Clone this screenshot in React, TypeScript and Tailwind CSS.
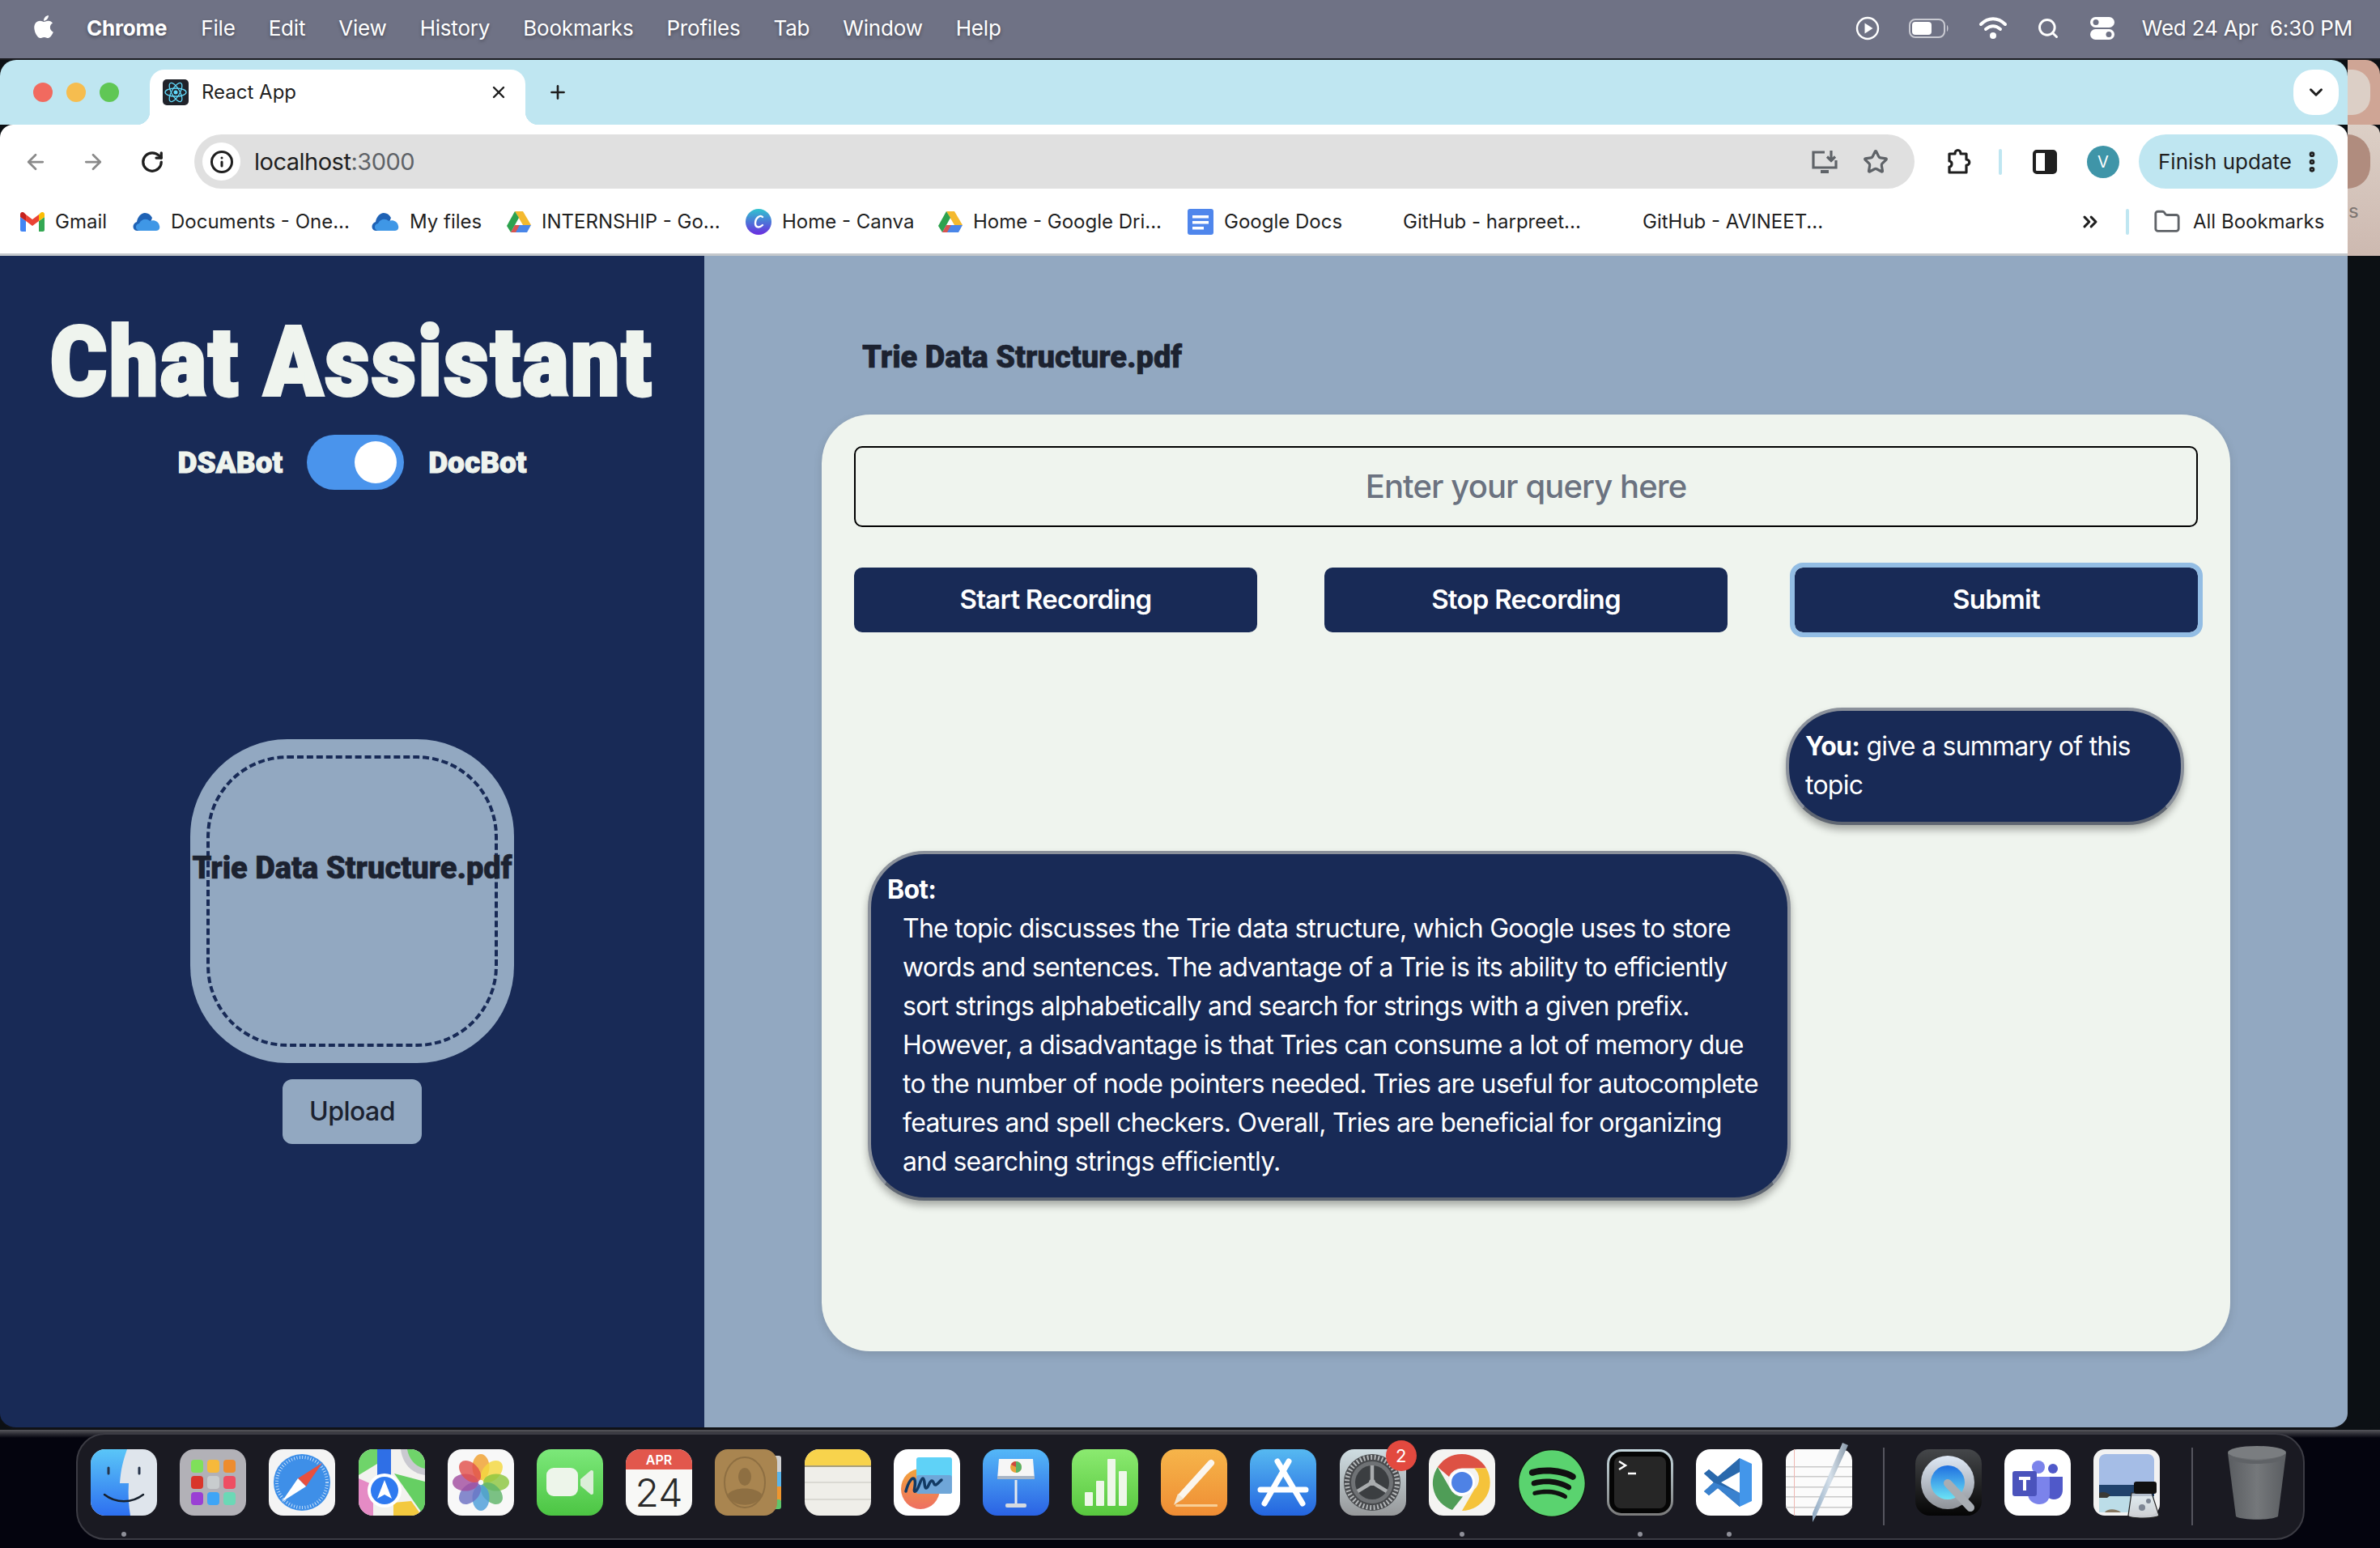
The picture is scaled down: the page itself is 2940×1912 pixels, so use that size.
import { FaApple, FaSpotify } from "react-icons/fa";
import {
  ArrowLeft,
  ArrowRight,
  RotateCw,
  Info,
  Star,
  X,
  Plus,
  ChevronDown,
  ChevronsRight,
  Folder,
  EllipsisVertical,
  Search,
} from "lucide-react";

const DISPLAY_FONT = "[font-family:Roboto,sans-serif]";

// --- menu bar ---
const MENU_ITEMS = ["File", "Edit", "View", "History", "Bookmarks", "Profiles", "Tab", "Window", "Help"];

function MenuBar() {
  return (
    <div className="h-[72px] shrink-0 bg-[#6f7285] flex items-center pb-[3px] text-white text-[26px] tracking-[-0.2px] [text-shadow:0_2px_4px_rgba(0,0,0,0.35)]">
      <FaApple className="ml-[38px] text-[32px] -mt-[4px]" />
      <span className="ml-[37px] font-bold">Chrome</span>
      <div className="ml-[42px] flex gap-[41px]">
        {MENU_ITEMS.map((m) => (
          <span key={m}>{m}</span>
        ))}
      </div>
      <div className="ml-auto mr-[34px] flex items-center">
        <svg width="32" height="32" viewBox="0 0 32 32" fill="none" stroke="white" strokeWidth="2.4">
          <circle cx="16" cy="16" r="13" />
          <path d="M12.5 9.5l10 6.5-10 6.5z" fill="white" stroke="none" />
        </svg>
        <svg className="ml-[35px]" width="50" height="26" viewBox="0 0 50 26" fill="none">
          <rect x="1" y="2" width="43" height="22" rx="7" stroke="#c9cad2" strokeWidth="2" />
          <rect x="4" y="5" width="24" height="16" rx="4" fill="white" />
          <path d="M47 9c2 1 2 7 0 8z" fill="#c9cad2" />
        </svg>
        <svg className="ml-[36px]" width="36" height="28" viewBox="0 0 36 28" fill="none" stroke="white" strokeWidth="4" strokeLinecap="round">
          <path d="M3 9c9-9 21-9 30 0" />
          <path d="M9 15c6-5 12-5 18 0" />
          <circle cx="18" cy="23" r="2" fill="white" />
        </svg>
        <Search className="ml-[36px]" size={28} strokeWidth={2.5} />
        <svg className="ml-[36px]" width="34" height="30" viewBox="0 0 34 30">
          <rect x="2" y="1" width="30" height="13" rx="6.5" fill="white" />
          <circle cx="9" cy="7.5" r="3.5" fill="#6f7285" />
          <rect x="2" y="16" width="30" height="13" rx="6.5" fill="white" />
          <circle cx="25" cy="22.5" r="3.5" fill="#6f7285" />
        </svg>
        <span className="ml-[32px] whitespace-pre">Wed 24 Apr  6:30 PM</span>
      </div>
    </div>
  );
}

// --- browser chrome ---
function ReactFavicon() {
  return (
    <svg width="32" height="32" viewBox="0 0 32 32" fill="none" stroke="#61dafb" strokeWidth="1.3">
      <rect width="32" height="32" rx="5" fill="#20232a" stroke="none" />
      <circle cx="16" cy="16" r="2.5" fill="#61dafb" stroke="none" />
      <ellipse cx="16" cy="16" rx="13" ry="5" />
      <ellipse cx="16" cy="16" rx="13" ry="5" transform="rotate(60 16 16)" />
      <ellipse cx="16" cy="16" rx="13" ry="5" transform="rotate(120 16 16)" />
    </svg>
  );
}

function TabStrip() {
  return (
    <div className="h-[80px] bg-[#bfe6f1] flex items-start">
      <div className="mt-[28px] ml-[41px] flex gap-[17px]">
        <span className="w-[24px] h-[24px] rounded-full bg-[#f16a5f]" />
        <span className="w-[24px] h-[24px] rounded-full bg-[#f6bd4f]" />
        <span className="w-[24px] h-[24px] rounded-full bg-[#60c755]" />
      </div>
      <div className="relative ml-[38px] mt-[12px] w-[464px] h-[68px] bg-white rounded-t-[18px] flex items-center pl-[16px] pr-[21px] pb-[12px]">
        <span className="absolute -left-[16px] bottom-0 w-[16px] h-[16px] bg-[radial-gradient(circle_at_0_0,transparent_16px,white_16.5px)]" />
        <span className="absolute -right-[16px] bottom-0 w-[16px] h-[16px] bg-[radial-gradient(circle_at_100%_0,transparent_16px,white_16.5px)]" />
        <ReactFavicon />
        <span className="ml-[16px] text-[24px] text-[#1f1f1f]">React App</span>
        <X className="ml-auto text-[#1f1f1f]" size={24} strokeWidth={2.4} />
      </div>
      <Plus className="ml-[27px] mt-[27px] text-[#1f1f1f]" size={26} strokeWidth={2.4} />
      <div className="ml-auto mr-[11px] mt-[12px] w-[56px] h-[56px] bg-white rounded-[24px] flex items-center justify-center">
        <ChevronDown size={26} strokeWidth={2.8} className="text-[#1f1f1f]" />
      </div>
    </div>
  );
}

const InstallIcon = () => (
  <svg className="ml-auto" width="34" height="30" viewBox="0 0 34 30" fill="none" stroke="#5f6368" strokeWidth="3.2">
    <path d="M17 3H3v19h28v-9" />
    <path d="M12 25h10v4H12z" fill="#5f6368" stroke="none" />
    <path d="M25 1v12M20 8.5l5 5 5-5" />
  </svg>
);

const ExtensionIcon = () => (
  <svg className="ml-[38px]" width="34" height="34" viewBox="0 0 34 34" fill="none" stroke="#1f1f1f" strokeWidth="3.2" strokeLinejoin="round">
    <path d="M5 7h7c0-6 7-6 7 0h7v7c5 0 5 7 0 7v9H5v-7c4 0 4-7 0-7z" />
  </svg>
);

function Toolbar() {
  return (
    <div className="h-[81px] bg-white flex items-center pt-[10px] rounded-t-[16px]">
      <ArrowLeft className="ml-[29px] text-[#8a8a8a]" size={30} strokeWidth={2.2} />
      <ArrowRight className="ml-[41px] text-[#8a8a8a]" size={30} strokeWidth={2.2} />
      <RotateCw className="ml-[43px] text-[#1f1f1f]" size={30} strokeWidth={2.6} />
      <div className="ml-[37px] w-[2125px] h-[67px] bg-[#e0e0e0] rounded-full flex items-center pl-[10px] pr-[32px]">
        <div className="w-[47px] h-[47px] rounded-full bg-white flex items-center justify-center">
          <Info size={30} strokeWidth={2.4} className="text-[#1f1f1f]" />
        </div>
        <span className="ml-[17px] text-[29px] tracking-[-0.5px] text-[#1f1f1f]">
          localhost<span className="text-[#5f6368]">:3000</span>
        </span>
        <InstallIcon />
        <Star className="ml-[30px] text-[#5f6368]" size={32} strokeWidth={2.4} />
      </div>
      <ExtensionIcon />
      <div className="ml-[32px] w-[4px] h-[32px] rounded-full bg-[#bfe6f1]" />
      <svg className="ml-[38px]" width="30" height="30" viewBox="0 0 30 30">
        <rect x="2" y="2" width="26" height="26" rx="3" fill="none" stroke="#1f1f1f" strokeWidth="4" />
        <rect x="15" y="2" width="13" height="26" fill="#1f1f1f" />
      </svg>
      <div className="ml-[37px] w-[40px] h-[40px] rounded-full bg-[#3f95a8] text-white text-[20px] flex items-center justify-center">
        V
      </div>
      <div className="ml-[24px] w-[246px] h-[67px] rounded-full bg-[#bfe6f1] flex items-center pl-[24px] pr-[16px] text-[26px] text-[#1f1f1f]">
        <span>Finish update</span>
        <EllipsisVertical className="ml-auto" size={32} strokeWidth={3} />
      </div>
    </div>
  );
}

const GmailIcon = () => (
  <svg width="30" height="24" viewBox="0 0 30 24">
    <path d="M2 24h5V11L0 6v16c0 1 1 2 2 2z" fill="#4285f4" />
    <path d="M23 24h5c1 0 2-1 2-2V6l-7 5z" fill="#34a853" />
    <path d="M23 3v8l7-5V3c0-3-3-4-5-2z" fill="#fbbc04" />
    <path d="M7 11V3l8 6 8-6v8l-8 6z" fill="#ea4335" />
    <path d="M0 3v3l7 5V3L5 1C3-1 0 0 0 3z" fill="#c5221f" />
  </svg>
);

const OneDriveIcon = () => (
  <svg width="34" height="24" viewBox="0 0 34 24">
    <path d="M5 23c-6-1-6-9 0-11 1-6 5-11 10-11 4 0 7 2 9 6l-6 16z" fill="#1f62b5" />
    <path d="M9 23C3 23 2 15 8 14c2-5 9-7 13-3 5-2 11 0 12 6 1 3-1 6-4 6z" fill="#3f97e6" />
  </svg>
);

const DriveIcon = () => (
  <svg width="30" height="28" viewBox="0 0 30 28">
    <path d="M10 1h10l10 17H20z" fill="#f4b92f" />
    <path d="M10 1L0 19l5 8 10-18z" fill="#2da24e" />
    <path d="M5 27h20l5-9H10z" fill="#4a86e8" />
    <path d="M5 27l5-9h6l-5 9z" fill="#e8503f" opacity="0.9" />
  </svg>
);

const CanvaIcon = () => (
  <svg width="32" height="32" viewBox="0 0 32 32">
    <defs>
      <linearGradient id="canva" x1="0" y1="0" x2="0" y2="1">
        <stop offset="0" stopColor="#2fc4cf" />
        <stop offset="1" stopColor="#6a2be0" />
      </linearGradient>
    </defs>
    <circle cx="16" cy="16" r="16" fill="url(#canva)" />
    <path d="M21 10c-3-3-9 1-9 8 0 5 5 6 9 2" fill="none" stroke="white" strokeWidth="2.4" strokeLinecap="round" />
  </svg>
);

const DocsIcon = () => (
  <svg width="32" height="32" viewBox="0 0 32 32">
    <rect width="32" height="32" rx="3" fill="#4f86ec" />
    <rect x="6" y="8" width="20" height="3.5" fill="white" />
    <rect x="6" y="15" width="20" height="3.5" fill="white" />
    <rect x="6" y="22" width="14" height="3.5" fill="white" />
  </svg>
);

function Bookmark({ icon, label, className }: { icon?: React.ReactNode; label: string; className: string }) {
  return (
    <div className={`flex items-center gap-[13px] text-[24px] text-[#1f1f1f] whitespace-nowrap shrink-0 ${className}`}>
      {icon}
      <span>{label}</span>
    </div>
  );
}

function BookmarksBar() {
  return (
    <div className="h-[81px] bg-white flex items-center border-b-[3px] border-[#c4c8cc]">
      <Bookmark className="w-[164px] pl-[25px]" icon={<GmailIcon />} label="Gmail" />
      <Bookmark className="w-[295px]" icon={<OneDriveIcon />} label="Documents - One..." />
      <Bookmark className="w-[167px]" icon={<OneDriveIcon />} label="My files" />
      <Bookmark className="w-[295px]" icon={<DriveIcon />} label="INTERNSHIP - Go..." />
      <Bookmark className="w-[238px]" icon={<CanvaIcon />} label="Home - Canva" />
      <Bookmark className="w-[308px]" icon={<DriveIcon />} label="Home - Google Dri..." />
      <Bookmark className="w-[266px]" icon={<DocsIcon />} label="Google Docs" />
      <Bookmark className="w-[296px]" label="GitHub - harpreet..." />
      <Bookmark className="w-[539px]" label="GitHub - AVINEET..." />
      <ChevronsRight size={28} strokeWidth={2.6} className="text-[#1f1f1f] shrink-0" />
      <div className="ml-[30px] w-[4px] h-[32px] rounded-full bg-[#bfe6f1]" />
      <Folder className="ml-[30px] text-[#5f6368]" size={34} strokeWidth={2} />
      <span className="ml-[15px] text-[24px] text-[#1f1f1f] whitespace-nowrap">All Bookmarks</span>
    </div>
  );
}

// --- the app in the page ---
function Sidebar() {
  return (
    <aside className="w-[870px] shrink-0 bg-[#182a56] flex flex-col items-center">
      <h1 className={`mt-[52px] text-[118px] leading-[160px] font-black text-[#eff4ee] whitespace-nowrap scale-x-[0.905] tracking-[3px] [-webkit-text-stroke:4px_#eff4ee] ${DISPLAY_FONT}`}>
        Chat Assistant
      </h1>
      <div className="mt-[9px] flex items-center">
        <span className={`text-[37px] font-black text-[#eff4ee] pt-[2px] [-webkit-text-stroke:1px_#eff4ee] ${DISPLAY_FONT}`}>DSABot</span>
        <div className="mx-[30px] w-[120px] h-[68px] rounded-full bg-[#4a94ec] flex items-center justify-end pr-[9px]">
          <div className="w-[52px] h-[52px] rounded-full bg-white" />
        </div>
        <span className={`text-[37px] font-black text-[#eff4ee] pt-[2px] [-webkit-text-stroke:1px_#eff4ee] ${DISPLAY_FONT}`}>DocBot</span>
      </div>
      <div className="mt-[308px] w-[400px] h-[400px] rounded-[120px] bg-[#92a8c1] p-[20px]">
        <div className="w-full h-full rounded-[100px] border-[4px] border-dashed border-[#182a56] flex justify-center pt-[111px]">
          <span className={`text-[38px] leading-[48px] h-[48px] font-black text-[#1c2230] whitespace-nowrap [-webkit-text-stroke:0.6px_#1c2230] ${DISPLAY_FONT}`}>
            Trie Data Structure.pdf
          </span>
        </div>
      </div>
      <button className="mt-[20px] w-[172px] h-[80px] rounded-[12px] bg-[#92a8c1] text-[32px] tracking-[-0.5px] font-medium text-[#1c2230]">
        Upload
      </button>
    </aside>
  );
}

function ActionButton({ label, focused }: { label: string; focused?: boolean }) {
  return (
    <button className={`h-[80px] rounded-[10px] bg-[#182a56] text-white text-[33px] tracking-[-0.75px] font-semibold ${focused ? "outline-[6px] outline-solid outline-[#93bde4]" : ""}`}>
      {label}
    </button>
  );
}

const BOT_TEXT =
  "The topic discusses the Trie data structure, which Google uses to store words and sentences. The advantage of a Trie is its ability to efficiently sort strings alphabetically and search for strings with a given prefix. However, a disadvantage is that Tries can consume a lot of memory due to the number of node pointers needed. Tries are useful for autocomplete features and spell checkers. Overall, Tries are beneficial for organizing and searching strings efficiently.";

function ChatMain() {
  return (
    <main className="flex-1 bg-[#92a8c1] pl-[145px]">
      <h2 className={`ml-[50px] mt-[100px] h-[50px] text-[38px] leading-[50px] font-black text-[#1c2230] whitespace-nowrap [-webkit-text-stroke:0.6px_#1c2230] ${DISPLAY_FONT}`}>
        Trie Data Structure.pdf
      </h2>
      <section className="mt-[46px] w-[1740px] h-[1157px] rounded-[60px] bg-[#eff4ee] px-[40px] pt-[39px] shadow-[0_4px_12px_rgba(0,0,0,0.12)]">
        <div className="h-[100px] rounded-[10px] border-[2px] border-black flex items-center justify-center text-[40px] tracking-[-0.9px] font-medium text-[#6b7280]">
          Enter your query here
        </div>
        <div className="mt-[50px] grid grid-cols-3 gap-[83px]">
          <ActionButton label="Start Recording" />
          <ActionButton label="Stop Recording" />
          <ActionButton label="Submit" focused />
        </div>
        <div className="mt-[93px] px-[17px] flex flex-col text-white text-[32px] leading-[48px] tracking-[-0.75px]">
          <div className="self-end w-[492px] h-[145px] rounded-[70px] bg-[#182a56] border-[4px] border-[#8b919b] border-b-[#5f6672] px-[20px] py-[20px] shadow-[0_6px_10px_rgba(0,0,0,0.3)]">
            <strong>You:</strong> give a summary of this topic
          </div>
          <div className="mt-[32px] w-[1140px] h-[432px] rounded-[70px] bg-[#182a56] border-[4px] border-[#8b919b] border-b-[#5f6672] pl-[20px] pr-[28px] py-[20px] shadow-[0_6px_10px_rgba(0,0,0,0.3)]">
            <strong className="block">Bot:</strong>
            <p className="pl-[19px]">{BOT_TEXT}</p>
          </div>
        </div>
      </section>
    </main>
  );
}

// --- dock ---
const Finder = () => (
  <svg viewBox="0 0 82 82">
    <defs>
      <linearGradient id="finderBlue" x1="0" y1="0" x2="0" y2="1">
        <stop offset="0" stopColor="#5ac6f8" />
        <stop offset="1" stopColor="#2d6ff0" />
      </linearGradient>
    </defs>
    <rect width="82" height="82" rx="18" fill="#dfe5ec" />
    <path d="M18 0h27c-5 14-8 26-9 42h11c-1 14 0 28 2 40H18C8 82 0 74 0 64V18C0 8 8 0 18 0z" fill="url(#finderBlue)" />
    <path d="M22 23v7M60 23v7" stroke="#26344a" strokeWidth="3" strokeLinecap="round" />
    <path d="M17 56c14 11 34 11 48 0" fill="none" stroke="#17202c" strokeWidth="2.5" strokeLinecap="round" />
  </svg>
);

const LAUNCH_COLORS = ["#7fe05a", "#f6b93b", "#ee8c2f", "#d9362b", "#c8ccce", "#ee4e63", "#9a3fd4", "#3ea5f6", "#6bd8b6"];

const Launchpad = () => (
  <svg viewBox="0 0 82 82">
    <rect width="82" height="82" rx="18" fill="#b2b1b7" />
    {LAUNCH_COLORS.map((c, i) => (
      <rect key={c} x={14 + (i % 3) * 20} y={13 + Math.floor(i / 3) * 20} width="15" height="16" rx="4" fill={c} />
    ))}
  </svg>
);

const Safari = () => (
  <svg viewBox="0 0 82 82">
    <rect width="82" height="82" rx="18" fill="#f4f4f4" />
    <circle cx="41" cy="41" r="35" fill="#3e8fe8" />
    <circle cx="41" cy="41" r="31" fill="none" stroke="white" strokeWidth="4" strokeDasharray="0.8 2.6" opacity="0.85" />
    <path d="M66 17L36 36l10 10z" fill="#e8503f" />
    <path d="M16 65l30-19-10-10z" fill="white" />
  </svg>
);

const Maps = () => (
  <svg viewBox="0 0 82 82">
    <rect width="82" height="82" rx="18" fill="#f2f2ef" />
    <path d="M0 18C0 8 8 0 18 0h5v18L0 32z" fill="#6fd46a" />
    <path d="M52 0h12c10 0 18 8 18 18v14C66 30 54 18 52 0z" fill="#c9c9d0" />
    <path d="M60 0h4c10 0 18 8 18 18v6C70 22 62 12 60 0z" fill="#6fd46a" />
    <path d="M44 30l38 10v24c0 6-2 10-5 13z" fill="#66cf63" />
    <path d="M0 36l18 8v38C8 82 0 74 0 64z" fill="#e58bc5" />
    <path d="M43 82V66l22-2 10 14c-3 3-7 4-11 4z" fill="#f3c93f" />
    <rect x="23" y="0" width="17" height="36" fill="#2f6fe6" />
    <circle cx="32" cy="51" r="21" fill="white" />
    <circle cx="32" cy="51" r="17" fill="#2f7af0" />
    <path d="M32 38l9 23-9-5-9 5z" fill="white" />
  </svg>
);

const PETALS = ["#f0a130", "#f4d83f", "#8cc63f", "#5fb56a", "#4c9ed9", "#6d72c3", "#a24ea0", "#e2504c"];

const Photos = () => (
  <svg viewBox="0 0 82 82">
    <rect width="82" height="82" rx="18" fill="#f8f8f8" />
    {PETALS.map((c, i) => (
      <ellipse key={c} cx="41" cy="22" rx="10.5" ry="16" fill={c} opacity="0.82" transform={`rotate(${i * 45} 41 41)`} />
    ))}
  </svg>
);

const FaceTime = () => (
  <svg viewBox="0 0 82 82">
    <defs>
      <linearGradient id="ftGreen" x1="0" y1="0" x2="0" y2="1">
        <stop offset="0" stopColor="#7ce87a" />
        <stop offset="1" stopColor="#4cc543" />
      </linearGradient>
    </defs>
    <rect width="82" height="82" rx="18" fill="url(#ftGreen)" />
    <rect x="12" y="23" width="39" height="35" rx="9" fill="#edf5ea" />
    <path d="M54 37l13-11c1 0 3 0 3 2v26c0 2-2 2-3 2L54 45z" fill="#dbeed8" />
  </svg>
);

const CalendarIcon = () => (
  <svg viewBox="0 0 82 82">
    <rect width="82" height="82" rx="18" fill="#f8f8f6" />
    <path d="M0 25V18C0 8 8 0 18 0h46c10 0 18 8 18 18v7z" fill="#e2574c" />
    <text x="41" y="19" textAnchor="middle" fontSize="16" fontWeight="600" fill="white" fontFamily="Inter, sans-serif">APR</text>
    <text x="41" y="71" textAnchor="middle" fontSize="48" fontWeight="300" fill="#2a2a2a" fontFamily="Inter, sans-serif">24</text>
  </svg>
);

const Contacts = () => (
  <svg viewBox="0 0 82 82">
    <rect x="70" y="8" width="12" height="22" rx="3" fill="#cfcfcf" />
    <rect x="70" y="28" width="12" height="20" fill="#5bb5ea" />
    <rect x="70" y="46" width="12" height="18" fill="#ee962f" />
    <rect x="70" y="62" width="12" height="12" rx="3" fill="#5fc66a" />
    <rect width="77" height="82" rx="16" fill="#a98550" />
    <ellipse cx="37" cy="41" rx="25" ry="31" fill="none" stroke="#8e6f42" strokeWidth="2" />
    <ellipse cx="37" cy="34" rx="8" ry="11" fill="#8e6f42" />
    <path d="M16 56c6-10 36-10 42 0-4 17-38 17-42 0z" fill="#8e6f42" />
  </svg>
);

const Notes = () => (
  <svg viewBox="0 0 82 82">
    <rect width="82" height="82" rx="18" fill="#efeee9" />
    <path d="M0 20v-2C0 8 8 0 18 0h46c10 0 18 8 18 18v2z" fill="#f8d34c" />
    <rect y="20" width="82" height="2" fill="#a89f7b" />
    <rect y="40" width="82" height="2" fill="#dad9d3" />
    <rect y="61" width="82" height="2" fill="#dad9d3" />
  </svg>
);

const Freeform = () => (
  <svg viewBox="0 0 82 82">
    <defs>
      <linearGradient id="ffOrange" x1="0" y1="0" x2="0" y2="1">
        <stop offset="0" stopColor="#f2a43a" />
        <stop offset="1" stopColor="#ee6f62" />
      </linearGradient>
    </defs>
    <rect width="82" height="82" rx="18" fill="white" />
    <ellipse cx="33" cy="49" rx="24" ry="25" fill="url(#ffOrange)" />
    <rect x="28" y="10" width="44" height="45" rx="3" fill="#5fd2f7" />
    <rect x="28" y="32" width="44" height="23" rx="3" fill="#6fa6d8" />
    <path d="M15 52c3-12 9-20 11-14s-3 16 1 14 6-16 9-16 1 12 4 12 4-9 7-9 2 6 5 5 4-4 7-6" fill="none" stroke="#123a63" strokeWidth="3.5" strokeLinecap="round" />
  </svg>
);

const Keynote = () => (
  <svg viewBox="0 0 82 82">
    <defs>
      <linearGradient id="knBlue" x1="0" y1="0" x2="0" y2="1">
        <stop offset="0" stopColor="#55b8f8" />
        <stop offset="1" stopColor="#2a62e4" />
      </linearGradient>
    </defs>
    <rect width="82" height="82" rx="18" fill="url(#knBlue)" />
    <path d="M20 12h42l2 25H18z" fill="#f6f6f6" />
    <rect x="18" y="33" width="46" height="4" fill="#a9b6c6" />
    <circle cx="41" cy="22" r="7" fill="#e8a33e" />
    <path d="M41 15a7 7 0 0 1 0 14z" fill="#58b368" />
    <path d="M41 15a7 7 0 0 0-6 4l6 3z" fill="#d0473f" />
    <rect x="39.5" y="38" width="3" height="30" fill="#e5e9ee" />
    <rect x="28" y="67" width="26" height="5" rx="2" fill="#d5dae0" />
  </svg>
);

const Numbers = () => (
  <svg viewBox="0 0 82 82">
    <defs>
      <linearGradient id="nbGreen" x1="0" y1="0" x2="0" y2="1">
        <stop offset="0" stopColor="#8bea70" />
        <stop offset="1" stopColor="#58c83f" />
      </linearGradient>
    </defs>
    <rect width="82" height="82" rx="18" fill="url(#nbGreen)" />
    <rect x="16" y="53" width="10" height="17" rx="1" fill="#eef7e9" />
    <rect x="30" y="39" width="10" height="31" rx="1" fill="#eef7e9" />
    <rect x="44" y="12" width="10" height="58" rx="1" fill="#eef7e9" />
    <rect x="58" y="27" width="10" height="43" rx="1" fill="#eef7e9" />
  </svg>
);

const Pages = () => (
  <svg viewBox="0 0 82 82">
    <defs>
      <linearGradient id="pgOrange" x1="0" y1="0" x2="0" y2="1">
        <stop offset="0" stopColor="#f6b54a" />
        <stop offset="1" stopColor="#ef8d34" />
      </linearGradient>
    </defs>
    <rect width="82" height="82" rx="18" fill="url(#pgOrange)" />
    <path d="M62 17L25 58" stroke="#fbf6ee" strokeWidth="8" strokeLinecap="round" />
    <path d="M21 55l7 6-12 8z" fill="#f3e6d2" />
    <rect x="18" y="68" width="52" height="3" rx="1" fill="#f8cf97" />
  </svg>
);

const AppStore = () => (
  <svg viewBox="0 0 82 82">
    <defs>
      <linearGradient id="asBlue" x1="0" y1="0" x2="0" y2="1">
        <stop offset="0" stopColor="#56b9f1" />
        <stop offset="1" stopColor="#2465e0" />
      </linearGradient>
    </defs>
    <rect width="82" height="82" rx="18" fill="url(#asBlue)" />
    <path d="M34 15l31 52M48 15L18 67M13 50h56" stroke="white" strokeWidth="7" strokeLinecap="round" fill="none" />
  </svg>
);

const SystemSettings = () => (
  <svg viewBox="0 0 82 82">
    <defs>
      <linearGradient id="setBg" x1="0" y1="0" x2="0" y2="1">
        <stop offset="0" stopColor="#cfdde2" />
        <stop offset="1" stopColor="#96989a" />
      </linearGradient>
    </defs>
    <rect width="82" height="82" rx="18" fill="url(#setBg)" />
    <circle cx="40" cy="41" r="35" fill="#47494c" />
    <circle cx="40" cy="41" r="31" fill="none" stroke="#b5b8ba" strokeWidth="6" strokeDasharray="2 2.5" />
    <circle cx="40" cy="41" r="26" fill="#6f7275" />
    <circle cx="40" cy="41" r="21" fill="#3b3e41" />
    <path d="M40 41V20M40 41l18 11M40 41L22 52" stroke="#a9acae" strokeWidth="4.5" />
    <circle cx="40" cy="41" r="4" fill="#a9acae" />
  </svg>
);

const ChromeIcon = () => (
  <svg viewBox="0 0 82 82">
    <rect width="82" height="82" rx="18" fill="#f4f4f2" />
    <path d="M41 6a35 35 0 0 1 30 17.5H41a17.5 17.5 0 0 0-16 10.5L11 22A35 35 0 0 1 41 6z" fill="#dd5144" />
    <path d="M11 22l15 26a17.5 17.5 0 0 0 16 10.5L29 75A35 35 0 0 1 11 22z" fill="#4f9d57" />
    <path d="M71 23.5a35 35 0 0 1-30 52.5l15-26a17.5 17.5 0 0 0 0-26.5z" fill="#f5c33b" />
    <circle cx="41" cy="41" r="16" fill="white" />
    <circle cx="41" cy="41" r="13" fill="#4e82e5" />
  </svg>
);

const Terminal = () => (
  <svg viewBox="0 0 82 82">
    <defs>
      <linearGradient id="termEdge" x1="0" y1="0" x2="0" y2="1">
        <stop offset="0" stopColor="#c6d9e0" />
        <stop offset="1" stopColor="#7b7b7b" />
      </linearGradient>
    </defs>
    <rect width="82" height="82" rx="18" fill="url(#termEdge)" />
    <rect x="3" y="3" width="76" height="76" rx="15" fill="#050505" />
    <rect x="9" y="9" width="64" height="64" rx="8" fill="#262626" />
    <path d="M15 15l8 5-8 5M26 30h10" stroke="white" strokeWidth="2.5" fill="none" />
  </svg>
);

const VSCodeTile = () => (
  <svg viewBox="0 0 82 82">
    <rect width="82" height="82" rx="18" fill="white" />
    <path d="M54 11l15 7v46l-15 7z" fill="#4396ea" />
    <path d="M54 11v17L31 41l23 13v17L27 48l-11 9-6-5 12-11-12-11 6-5 11 9z" fill="#2a69ad" />
    <path d="M54 28v-17L27 34l-11-9-6 5 12 11z" fill="#2a69ad" />
    <path d="M54 54v17L27 48l-11 9-6-5 12-11z" fill="#3a82cf" />
  </svg>
);

const TextEdit = () => (
  <svg viewBox="0 0 82 82" className="overflow-visible">
    <defs>
      <linearGradient id="penBody" x1="0" y1="0" x2="1" y2="0">
        <stop offset="0" stopColor="#8fa9c2" />
        <stop offset="0.5" stopColor="#d5e0ea" />
        <stop offset="1" stopColor="#8898a8" />
      </linearGradient>
    </defs>
    <rect width="82" height="82" rx="14" fill="#fbfbfb" />
    {[21, 33, 46, 58, 71].map((y) => (
      <rect key={y} y={y} width="82" height="1.5" fill="#c9c9c9" />
    ))}
    <rect x="10" width="1" height="82" fill="#efb7b2" />
    <path d="M70-8l7 3-39 86-5 9 0-11z" fill="url(#penBody)" />
  </svg>
);

const QuickTime = () => (
  <svg viewBox="0 0 82 82">
    <defs>
      <linearGradient id="qtBg" x1="0" y1="0" x2="0" y2="1">
        <stop offset="0" stopColor="#45474a" />
        <stop offset="1" stopColor="#050505" />
      </linearGradient>
      <linearGradient id="qtRing" x1="0" y1="0" x2="0" y2="1">
        <stop offset="0" stopColor="#dfe9f6" />
        <stop offset="1" stopColor="#8e9298" />
      </linearGradient>
      <linearGradient id="qtBlue" x1="0" y1="0" x2="0" y2="1">
        <stop offset="0" stopColor="#1f6fe0" />
        <stop offset="1" stopColor="#6ce4f5" />
      </linearGradient>
    </defs>
    <rect width="82" height="82" rx="18" fill="url(#qtBg)" />
    <circle cx="40" cy="41" r="33" fill="url(#qtRing)" />
    <circle cx="40" cy="41" r="21" fill="url(#qtBlue)" />
    <path d="M40 42l28 30" stroke="#a8adb3" strokeWidth="10" strokeLinecap="round" />
  </svg>
);

const TeamsTile = () => (
  <svg viewBox="0 0 82 82">
    <rect width="82" height="82" rx="18" fill="white" />
    <circle cx="42" cy="22" r="8" fill="#7b83eb" />
    <circle cx="60" cy="24" r="6" fill="#5059c9" />
    <path d="M52 34h20v16c0 8-5 12-11 12s-9-4-9-8z" fill="#5059c9" />
    <path d="M29 34h27v21c0 9-6 13-13 13s-14-5-14-13z" fill="#7b83eb" />
    <rect x="10" y="27" width="30" height="31" rx="3" fill="#4b53bc" />
    <path d="M18 34h14v4h-5v13h-4V38h-5z" fill="white" />
  </svg>
);

const Preview = () => (
  <svg viewBox="0 0 82 82" className="overflow-visible">
    <defs>
      <linearGradient id="pvGlass" x1="0" y1="0" x2="0" y2="1">
        <stop offset="0" stopColor="#eef0f2" stopOpacity="0.7" />
        <stop offset="1" stopColor="#c9ccd0" />
      </linearGradient>
    </defs>
    <rect width="82" height="82" rx="14" fill="#f2f2f2" />
    <path d="M7 14c0-4 3-8 8-8h52c5 0 8 4 8 8v64H7z" fill="#a5bde6" />
    <rect x="7" y="44" width="68" height="14" fill="#20426c" />
    <rect x="7" y="58" width="68" height="20" fill="#bcdde8" />
    <path d="M7 54c5-2 10-1 14 3l-4 3H7z" fill="#3a3a36" />
    <path d="M14 78c3-5 14-5 20 0z" fill="#85765f" />
    <path d="M47 54h25l9 28c-4 4-36 4-38 0z" fill="url(#pvGlass)" stroke="#222" strokeWidth="1.2" />
    <rect x="50" y="40" width="28" height="15" rx="3" fill="#111" />
    <circle cx="60" cy="72" r="4" fill="#7d8694" />
    <circle cx="68" cy="64" r="3" fill="#7d8694" />
  </svg>
);

const Trash = () => (
  <svg viewBox="0 0 82 82" className="overflow-visible">
    <defs>
      <linearGradient id="trashBody" x1="0" y1="0" x2="1" y2="0">
        <stop offset="0" stopColor="#5a5d61" />
        <stop offset="0.5" stopColor="#75787b" />
        <stop offset="1" stopColor="#5a5d61" />
      </linearGradient>
    </defs>
    <path d="M2 5h72l-10 78c-8 5-44 5-52 0z" fill="url(#trashBody)" />
    <ellipse cx="38" cy="4" rx="36" ry="8" fill="#7a7d80" />
    <path d="M3 6c10 10 60 10 70 0l-1 6c-14 8-54 8-68 0z" fill="#5f6266" />
  </svg>
);

function DockIcon({ children, running, badge, className }: { children: React.ReactNode; running?: boolean; badge?: string; className?: string }) {
  return (
    <div className={`relative w-[82px] h-[82px] shrink-0 ${className ?? ""}`}>
      {children}
      {badge && (
        <span className="absolute -top-[11px] -right-[13px] w-[38px] h-[38px] rounded-full bg-[#e2493f] text-white text-[22px] flex items-center justify-center">
          {badge}
        </span>
      )}
      {running && <span className="absolute left-[38px] top-[102px] w-[6px] h-[6px] rounded-full bg-[#8f9099]" />}
    </div>
  );
}

const Separator = () => <div className="mx-[10px] w-[2px] h-[96px] -mt-[2px] bg-[#55555e] shrink-0" />;

function Dock() {
  return (
    <div className="h-[146px] shrink-0 pt-[4px] bg-[linear-gradient(#57575c,#04040e_10px)]">
      <div className="ml-[94px] w-[2753px] h-[132px] rounded-[36px] bg-[#1a1a22] border-[2px] border-[#3c3c44] flex items-start gap-[28.2px] pl-[16px] pt-[18px]">
        <DockIcon running><Finder /></DockIcon>
        <DockIcon><Launchpad /></DockIcon>
        <DockIcon><Safari /></DockIcon>
        <DockIcon><Maps /></DockIcon>
        <DockIcon><Photos /></DockIcon>
        <DockIcon><FaceTime /></DockIcon>
        <DockIcon><CalendarIcon /></DockIcon>
        <DockIcon><Contacts /></DockIcon>
        <DockIcon><Notes /></DockIcon>
        <DockIcon><Freeform /></DockIcon>
        <DockIcon><Keynote /></DockIcon>
        <DockIcon><Numbers /></DockIcon>
        <DockIcon><Pages /></DockIcon>
        <DockIcon><AppStore /></DockIcon>
        <DockIcon badge="2"><SystemSettings /></DockIcon>
        <DockIcon running><ChromeIcon /></DockIcon>
        <DockIcon><FaSpotify className="w-[84px] h-[84px] text-[#5ad36f] bg-[#111] rounded-full" /></DockIcon>
        <DockIcon running><Terminal /></DockIcon>
        <DockIcon running><VSCodeTile /></DockIcon>
        <DockIcon><TextEdit /></DockIcon>
        <Separator />
        <DockIcon><QuickTime /></DockIcon>
        <DockIcon><TeamsTile /></DockIcon>
        <DockIcon><Preview /></DockIcon>
        <Separator />
        <DockIcon className="ml-[3px]"><Trash /></DockIcon>
      </div>
    </div>
  );
}

// the other window that sticks out behind the browser on the right
function BehindWindow() {
  return (
    <div className="flex-1 flex flex-col overflow-hidden">
      <div className="h-[80px] bg-[#cfa595] rounded-tr-[18px] pt-[12px]">
        <div className="w-[28px] h-[56px] rounded-r-[22px] bg-[#dccfc6]" />
      </div>
      <div className="h-[162px] bg-[linear-gradient(#dccfc6,#cdb9b0)] rounded-tr-[12px] pt-[12px]">
        <div className="w-[28px] h-[67px] rounded-r-[30px] bg-[#b08c7e]" />
        <span className="block mt-[10px] ml-[1px] text-[24px] text-[#7d7571]">s</span>
      </div>
      <div className="flex-1 bg-[#0c1014] rounded-br-[20px]" />
    </div>
  );
}

export default function App() {
  return (
    <div className="w-[2940px] h-[1912px] overflow-hidden bg-[#04040e] flex flex-col [font-family:Inter,sans-serif]">
      <MenuBar />
      <div className="h-[1694px] shrink-0 flex border-t-[2px] border-[#1b1b20] bg-[#0c1014]">
        <div className="w-[2900px] shrink-0 flex flex-col rounded-t-[20px] rounded-b-[20px] overflow-hidden border-b-[3px] border-[#101216]">
          <TabStrip />
          <Toolbar />
          <BookmarksBar />
          <div className="flex-1 flex min-h-0">
            <Sidebar />
            <ChatMain />
          </div>
        </div>
        <BehindWindow />
      </div>
      <Dock />
    </div>
  );
}
